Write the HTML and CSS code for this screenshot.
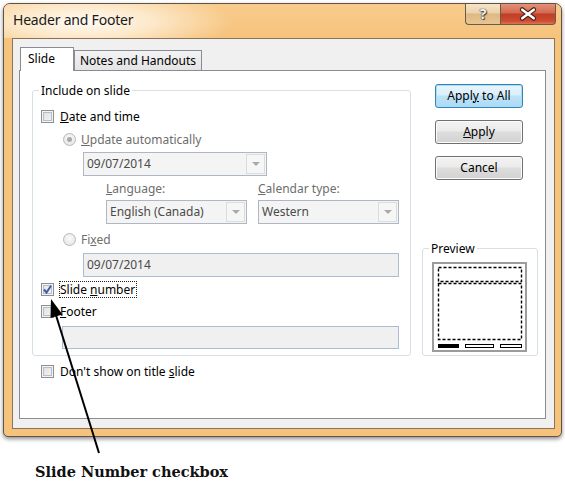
FILE: index.html
```html
<!DOCTYPE html>
<html>
<head>
<meta charset="utf-8">
<title>Header and Footer</title>
<link rel="stylesheet" href="styles.css">
</head>
<body>
<div class="window">
  <div class="titlebar">
    <div class="title">Header and Footer</div>
    <div class="capbtns">
      <div class="capbtn help">?</div>
      <div class="capbtn close">
        <svg width="56" height="20" viewBox="0 0 56 20">
          <path d="M22 5.5 L34 14.5 M34 5.5 L22 14.5" stroke="#4a2018" stroke-width="5" stroke-linecap="round" fill="none"/>
          <path d="M22 5.5 L34 14.5 M34 5.5 L22 14.5" stroke="#ffffff" stroke-width="2.6" stroke-linecap="round" fill="none"/>
        </svg>
      </div>
    </div>
  </div>
  <div class="client">
    <div class="tabs">
      <div class="tab active">Slide</div>
      <div class="tab">Notes and Handouts</div>
    </div>
    <div class="panel">
      <div class="leftcol">
        <div class="group incl">
          <span class="legend">Include on slide</span>
          <div class="row chk"><span class="cb"></span><span><u>D</u>ate and time</span></div>
          <div class="row rad r-update"><span class="rb on"></span><span class="dis"><u>U</u>pdate automatically</span></div>
          <div class="combo w-date"><span class="ctext">09/07/2014</span><span class="drop"><span class="tri"></span></span></div>
          <div class="labels">
            <span class="dis lab-lang"><u>L</u>anguage:</span>
            <span class="dis"><u>C</u>alendar type:</span>
          </div>
          <div class="combos">
            <div class="combo w-lang"><span class="ctext">English (Canada)</span><span class="drop"><span class="tri"></span></span></div>
            <div class="combo w-lang"><span class="ctext">Western</span><span class="drop"><span class="tri"></span></span></div>
          </div>
          <div class="row rad r-fixed"><span class="rb"></span><span class="dis">Fi<u>x</u>ed</span></div>
          <div class="tbox w-fixed">09/07/2014</div>
          <div class="row chk r-slide"><span class="cb checked"><svg width="11" height="11" viewBox="0 0 11 11"><path d="M2 5.5 L4.5 8.5 L9 1.8" stroke="#3d5fae" stroke-width="2" fill="none"/></svg></span><span class="focus">Slide <u>n</u>umber</span></div>
          <div class="row chk"><span class="cb"></span><span><u>F</u>ooter</span></div>
          <div class="tbox w-footer"></div>
        </div>
        <div class="row chk dont"><span class="cb"></span><span>Don't show on title <u>s</u>lide</span></div>
      </div>
      <div class="rightcol">
        <div class="btn default">Appl<u>y</u> to All</div>
        <div class="btn"><u>A</u>pply</div>
        <div class="btn">Cancel</div>
        <div class="group preview">
          <span class="legend">Preview</span>
          <svg class="pv" width="95" height="90" viewBox="0 0 95 90">
            <rect x="1" y="1" width="93" height="88" fill="#fff" stroke="#9c9c9c" stroke-width="2"/>
            <rect x="6.5" y="5.5" width="83" height="14" fill="none" stroke="#000" stroke-width="1.4" stroke-dasharray="3 2"/>
            <rect x="6.5" y="21.5" width="83" height="56" fill="none" stroke="#000" stroke-width="1.4" stroke-dasharray="3 2"/>
            <rect x="6" y="82" width="21" height="4" fill="#000"/>
            <rect x="33.5" y="82.5" width="28" height="3" fill="#fff" stroke="#000" stroke-width="1"/>
            <rect x="68.5" y="82.5" width="21" height="3" fill="#fff" stroke="#000" stroke-width="1"/>
          </svg>
        </div>
      </div>
    </div>
  </div>
</div>
<div class="caption">Slide Number checkbox</div>
<svg class="arrow" width="565" height="499" viewBox="0 0 565 499">
  <line x1="99" y1="453" x2="55" y2="312" stroke="#000" stroke-width="2"/>
  <polygon points="51,299 62.5,314.5 50.5,318" fill="#000"/>
</svg>
</body>
</html>
```

FILE: styles.css
```css
* { box-sizing: border-box; }
html, body { margin: 0; padding: 0; }
body {
  width: 565px;
  height: 499px;
  background: #fff;
  position: relative;
  overflow: hidden;
  font-family: "Noto Sans", "Open Sans", sans-serif;
  font-size: 12px;
  color: #000;
}
u { text-decoration-thickness: 1px; text-underline-offset: 1px; }

.window {
  margin: 3px 0 0 3px;
  width: 559px;
  height: 434px;
  border: 1px solid #5e5347;
  border-radius: 7px 7px 5px 5px;
  background: #f6c37c;
  box-shadow: 0 2px 4px rgba(0,0,0,.45);
  display: flex;
  flex-direction: column;
  overflow: hidden;
}
.titlebar {
  height: 34px;
  flex: none;
  display: flex;
  align-items: flex-start;
  background:
    radial-gradient(ellipse 150px 34px at 80px 18px, rgba(255,251,244,1) 0%, rgba(255,244,226,.75) 45%, rgba(255,236,205,0) 100%),
    linear-gradient(#f8cb8c, #f6c37c);
}
.title {
  padding-left: 9px;
  font-size: 14px;
  line-height: 32px;
  color: #1a1a1a;
  letter-spacing: -0.2px;
}
.capbtns {
  margin-left: auto;
  margin-right: 5px;
  display: flex;
}
.capbtn {
  height: 21px;
  border: 1px solid #6a5a48;
  border-top: none;
  display: flex;
  align-items: center;
  justify-content: center;
}
.help {
  width: 35px;
  border-radius: 0 0 0 4px;
  border-right: none;
  background: linear-gradient(#f7e3c6, #ecd2ab 45%, #ddb882 50%, #e7c594);
  font-weight: bold;
  font-size: 14px;
  color: #f4f4f4;
  text-shadow: 0 0 1px #333, 0 0 1px #333, 1px 1px 1px #444;
  line-height: 20px;
}
.close {
  width: 56px;
  border-radius: 0 0 4px 0;
  background: linear-gradient(#e3937b, #d2694f 45%, #c23c25 50%, #cc4d32 85%, #de7452);
}

.client {
  flex: 1;
  margin: 0 6px 7px 8px;
  border: 1px solid #8a7457;
  background: #f0f0f0;
  padding: 8px 8px 9px 6px;
  display: flex;
  flex-direction: column;
}
.tabs {
  height: 23px;
  flex: none;
  display: flex;
  align-items: flex-end;
  padding-left: 1px;
}
.tab {
  border: 1px solid #898c95;
  border-bottom: none;
  height: 20px;
  line-height: 19px;
  padding: 0 4px;
  text-align: center;
  background: linear-gradient(#f3f3f3, #e4e4e4);
  width: 128px;
}
.tab.active {
  width: 54px;
  height: 24px;
  line-height: 22px;
  margin-bottom: -1px;
  position: relative;
  z-index: 2;
  background: #fff;
  text-align: left;
  padding-left: 7px;
}
.panel {
  flex: 1;
  background: #fff;
  border: 1px solid #898c95;
  display: flex;
  padding-left: 12px;
}
.leftcol { padding-top: 19px; width: 379px; }
.rightcol { padding-top: 13px; margin-left: 11px; width: 116px; }

.group {
  position: relative;
  border: 1px solid #d5dfe5;
  border-radius: 3px;
}
.legend {
  position: absolute;
  top: -8px;
  left: 6px;
  padding: 0 2px;
  background: #fff;
  line-height: 16px;
}
.incl {
  height: 266px;
  padding: 14px 0 0 0;
}
.row {
  display: flex;
  align-items: center;
  height: 22px;
  gap: 6px;
}
.row.chk { padding-left: 8px; }
.row.rad { padding-left: 30px; gap: 5px; }
.r-update { margin-top: 1px; }
.r-fixed { margin-top: 4px; }
.r-slide { margin-top: 1px; }
.dont { margin-top: 4px; padding-left: 9px !important; }

.cb {
  width: 13px;
  height: 13px;
  flex: none;
  border: 1px solid #8e8f8f;
  background: linear-gradient(135deg, #d9dce1, #f7f7f7);
  box-shadow: inset 0 0 0 1px #f4f4f4, inset 0 0 0 2px #b9bec6;
  display: flex;
  align-items: center;
  justify-content: center;
}
.cb.checked { background: linear-gradient(135deg, #dfe3ea, #f8f8f8); }
.cb svg { display: block; }
.rb {
  width: 13px;
  height: 13px;
  flex: none;
  border-radius: 50%;
  border: 1px solid #b8b8b8;
  background: radial-gradient(circle at 50% 40%, #fbfbfb, #e1e1e1);
  display: flex;
  align-items: center;
  justify-content: center;
}
.rb.on::after {
  content: "";
  width: 5px;
  height: 5px;
  border-radius: 50%;
  background: #a9a9a9;
}
.dis { color: #6d6d6d; }
.focus {
  border: 1px dotted #222;
  margin-left: -1px;
  padding-right: 1px;
  line-height: 15px;
}

.combo {
  height: 24px;
  border: 1px solid #adb8c4;
  background: #f4f4f4;
  display: flex;
  align-items: stretch;
}
.ctext {
  flex: 1;
  padding-left: 3px;
  line-height: 22px;
  color: #4a4a4a;
}
.drop {
  width: 19px;
  margin: 1px;
  border: 1px solid #dcdcdc;
  background: #f6f6f6;
  display: flex;
  align-items: center;
  justify-content: center;
}
.tri {
  width: 0;
  height: 0;
  border-left: 4px solid transparent;
  border-right: 4px solid transparent;
  border-top: 4px solid #a9a9a9;
}
.w-date { width: 184px; margin: 2px 0 0 50px; }
.labels {
  display: flex;
  height: 24px;
  align-items: center;
  margin-left: 73px;
}
.lab-lang { width: 152px; }
.combos {
  display: flex;
  gap: 11px;
  margin-left: 73px;
}
.w-lang { width: 141px; }
.tbox {
  height: 24px;
  border: 1px solid #abbdd3;
  background: #f0f0f0;
  padding-left: 3px;
  line-height: 22px;
  color: #4a4a4a;
}
.w-fixed { width: 316px; margin: 3px 0 0 50px; }
.w-footer { width: 337px; height: 23px; margin: 4px 0 0 29px; }

.btn {
  width: 88px;
  height: 24px;
  margin-left: 13px;
  margin-bottom: 12px;
  border: 1px solid #707070;
  border-radius: 3px;
  background: linear-gradient(#f3f3f3, #ebebeb 45%, #dddddd 50%, #d2d2d2);
  box-shadow: inset 0 0 0 1px #fbfbfb;
  text-align: center;
  line-height: 22px;
}
.btn.default {
  border-color: #3c7fb1;
  background: linear-gradient(#e8f5fc, #dbeffb 45%, #bee3f8 50%, #acdaf5);
  box-shadow: inset 0 0 0 1px #9fe0fb;
}
.preview {
  height: 108px;
  margin-top: 68px;
  padding: 13px 0 0 9px;
}
.pv { display: block; }

.caption {
  margin-top: 26px;
  padding-left: 35px;
  font-family: "DejaVu Serif", "Liberation Serif", serif;
  font-weight: bold;
  font-size: 14.5px;
  line-height: 18px;
  color: #111;
}
.arrow {
  position: absolute;
  left: 0;
  top: 0;
  pointer-events: none;
}
```
